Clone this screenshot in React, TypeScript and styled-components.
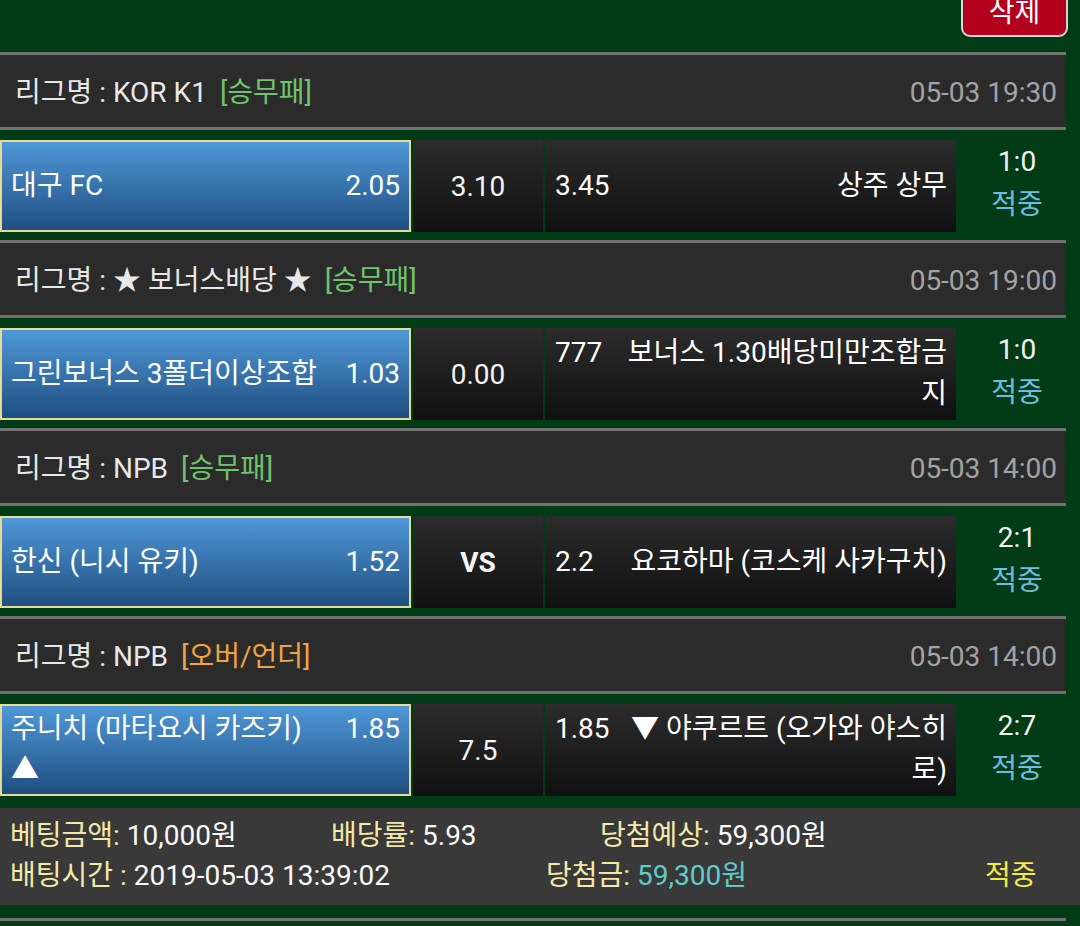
import styled, { createGlobalStyle } from "styled-components";

const GlobalStyle = createGlobalStyle`
  body {
    margin: 0;
    background: #023c16;
    font-family: Roboto, "Noto Sans CJK KR", sans-serif;
    color: #f2f2f2;
  }
`;

type Game = {
  league: string;
  tag: string;
  tagColor: "green" | "orange";
  time: string;
  home: string;
  homeMark?: string;
  homeOdds: string;
  draw: string;
  drawBold?: boolean;
  away: string;
  awayOdds: string;
  score: string;
  result: string;
};

const games: Game[] = [
  {
    league: "KOR K1",
    tag: "[승무패]",
    tagColor: "green",
    time: "05-03 19:30",
    home: "대구 FC",
    homeOdds: "2.05",
    draw: "3.10",
    away: "상주 상무",
    awayOdds: "3.45",
    score: "1:0",
    result: "적중",
  },
  {
    league: "★ 보너스배당 ★",
    tag: "[승무패]",
    tagColor: "green",
    time: "05-03 19:00",
    home: "그린보너스 3폴더이상조합",
    homeOdds: "1.03",
    draw: "0.00",
    away: "보너스 1.30배당미만조합금지",
    awayOdds: "777",
    score: "1:0",
    result: "적중",
  },
  {
    league: "NPB",
    tag: "[승무패]",
    tagColor: "green",
    time: "05-03 14:00",
    home: "한신 (니시 유키)",
    homeOdds: "1.52",
    draw: "VS",
    drawBold: true,
    away: "요코하마 (코스케 사카구치)",
    awayOdds: "2.2",
    score: "2:1",
    result: "적중",
  },
  {
    league: "NPB",
    tag: "[오버/언더]",
    tagColor: "orange",
    time: "05-03 14:00",
    home: "주니치 (마타요시 카즈키)",
    homeMark: "▲",
    homeOdds: "1.85",
    draw: "7.5",
    away: "▼ 야쿠르트 (오가와 야스히로)",
    awayOdds: "1.85",
    score: "2:7",
    result: "적중",
  },
];

const App = () => {
  return (
    <Page>
      <GlobalStyle />
      <TopBar>
        <DeleteButton>삭제</DeleteButton>
      </TopBar>

      {games.map((g, i) => (
        <div key={i}>
          <LeagueHeader>
            <HeaderTitle>
              리그명 : {g.league}
              <Tag $color={g.tagColor}>{g.tag}</Tag>
            </HeaderTitle>
            <Time>{g.time}</Time>
          </LeagueHeader>
          <BetRow>
            <HomePick>
              <PickText>
                <Odds $side="right">{g.homeOdds}</Odds>
                {g.home}
                {g.homeMark && <Mark>{g.homeMark}</Mark>}
              </PickText>
            </HomePick>
            <DrawBox $bold={g.drawBold}>{g.draw}</DrawBox>
            <AwayPick>
              <PickText $align="right">
                <Odds $side="left">{g.awayOdds}</Odds>
                {g.away}
              </PickText>
            </AwayPick>
            <ResultCell>
              <span>{g.score}</span>
              <ResultText>{g.result}</ResultText>
            </ResultCell>
          </BetRow>
        </div>
      ))}

      <Summary>
        <SummaryLine>
          <SummaryItem $width={321}>
            <Label>베팅금액:</Label> 10,000원
          </SummaryItem>
          <SummaryItem $width={269}>
            <Label>배당률:</Label> 5.93
          </SummaryItem>
          <SummaryItem>
            <Label>당첨예상:</Label> 59,300원
          </SummaryItem>
        </SummaryLine>
        <SummaryLine>
          <SummaryItem $width={536}>
            <Label>배팅시간 :</Label> 2019-05-03 13:39:02
          </SummaryItem>
          <SummaryItem $width={439}>
            <Label>당첨금:</Label> <WinAmount>59,300원</WinAmount>
          </SummaryItem>
          <Status>적중</Status>
        </SummaryLine>
      </Summary>
      <BottomRule />
    </Page>
  );
};

export default App;

const Page = styled.div`
  width: 1080px;
  height: 926px;
  overflow: hidden;
  font-size: 28px;
`;

const TopBar = styled.div`
  height: 52px;
  display: flex;
  justify-content: flex-end;
  align-items: flex-start;
  padding-right: 12px;
`;

const DeleteButton = styled.button`
  margin-top: -22px;
  width: 107px;
  height: 59px;
  background: #b3001d;
  border: 2px solid #d6d6d6;
  border-radius: 0 0 9px 9px;
  color: #fff;
  font-family: Roboto, "Noto Sans CJK KR", sans-serif;
  font-size: 28px;
  padding: 5px 0 0;
  display: flex;
  align-items: center;
  justify-content: center;
`;

const LeagueHeader = styled.div`
  width: 1066px;
  box-sizing: border-box;
  height: 78px;
  background: #2b2b2b;
  border-top: 3px solid #737373;
  border-bottom: 3px solid #737373;
  display: flex;
  align-items: center;
  justify-content: space-between;
  padding: 4px 9px 0 15px;
  color: #e8e8e8;
`;

const HeaderTitle = styled.span`
  line-height: 36px;
  height: 36px;
  overflow: visible;
`;

const Tag = styled.span<{ $color: "green" | "orange" }>`
  margin-left: 13px;
  color: ${(p) => (p.$color === "green" ? "#6fc56b" : "#f2a342")};
`;

const Time = styled.span`
  color: #a3a3a3;
  line-height: 36px;
`;

const BetRow = styled.div`
  display: grid;
  grid-template-columns: 411px 130px 411px 118px;
  column-gap: 2px;
  height: 92px;
  margin: 10px 0 8px;
`;

const HomePick = styled.div`
  box-sizing: border-box;
  border: 2px solid #e7da93;
  background: linear-gradient(#4f98d8, #1f4e80);
  padding: 0 9px 0 9px;
  display: flex;
  align-items: center;
  color: #fff;
`;

const AwayPick = styled.div`
  box-sizing: border-box;
  background: linear-gradient(#2c2c2c, #101010);
  padding: 0 9px 0 10px;
  display: flex;
  align-items: center;
  color: #fff;
`;

const PickText = styled.div<{ $align?: "left" | "right" }>`
  width: 100%;
  line-height: 41px;
  padding-bottom: 2px;
  text-align: ${(p) => p.$align ?? "left"};
`;

const Odds = styled.span<{ $side: "left" | "right" }>`
  float: ${(p) => p.$side};
`;

const Mark = styled.span`
  display: block;
`;

const DrawBox = styled.div<{ $bold?: boolean }>`
  background: linear-gradient(#2c2c2c, #101010);
  display: flex;
  align-items: center;
  justify-content: center;
  color: #f4f4f4;
  font-weight: ${(p) => (p.$bold ? 700 : 400)};
`;

const ResultCell = styled.div`
  display: flex;
  flex-direction: column;
  align-items: center;
  justify-content: center;
  line-height: 43px;
  padding-bottom: 6px;
  color: #f2f2f2;
`;

const ResultText = styled.span`
  color: #6cbfe2;
`;

const Summary = styled.div`
  margin-top: 12px;
  height: 97px;
  box-sizing: border-box;
  background: #393939;
  padding: 8px 10px;
  line-height: 40px;
  color: #fafafa;
`;

const SummaryLine = styled.div`
  display: flex;
`;

const SummaryItem = styled.div<{ $width?: number }>`
  width: ${(p) => (p.$width ? `${p.$width}px` : "auto")};
  white-space: nowrap;
`;

const Label = styled.span`
  color: #f3e9a9;
`;

const WinAmount = styled.span`
  color: #5fcbc9;
`;

const Status = styled.span`
  color: #f4ea4c;
`;

const BottomRule = styled.div`
  margin-top: 13px;
  width: 1066px;
  border-top: 3px solid #737373;
`;
